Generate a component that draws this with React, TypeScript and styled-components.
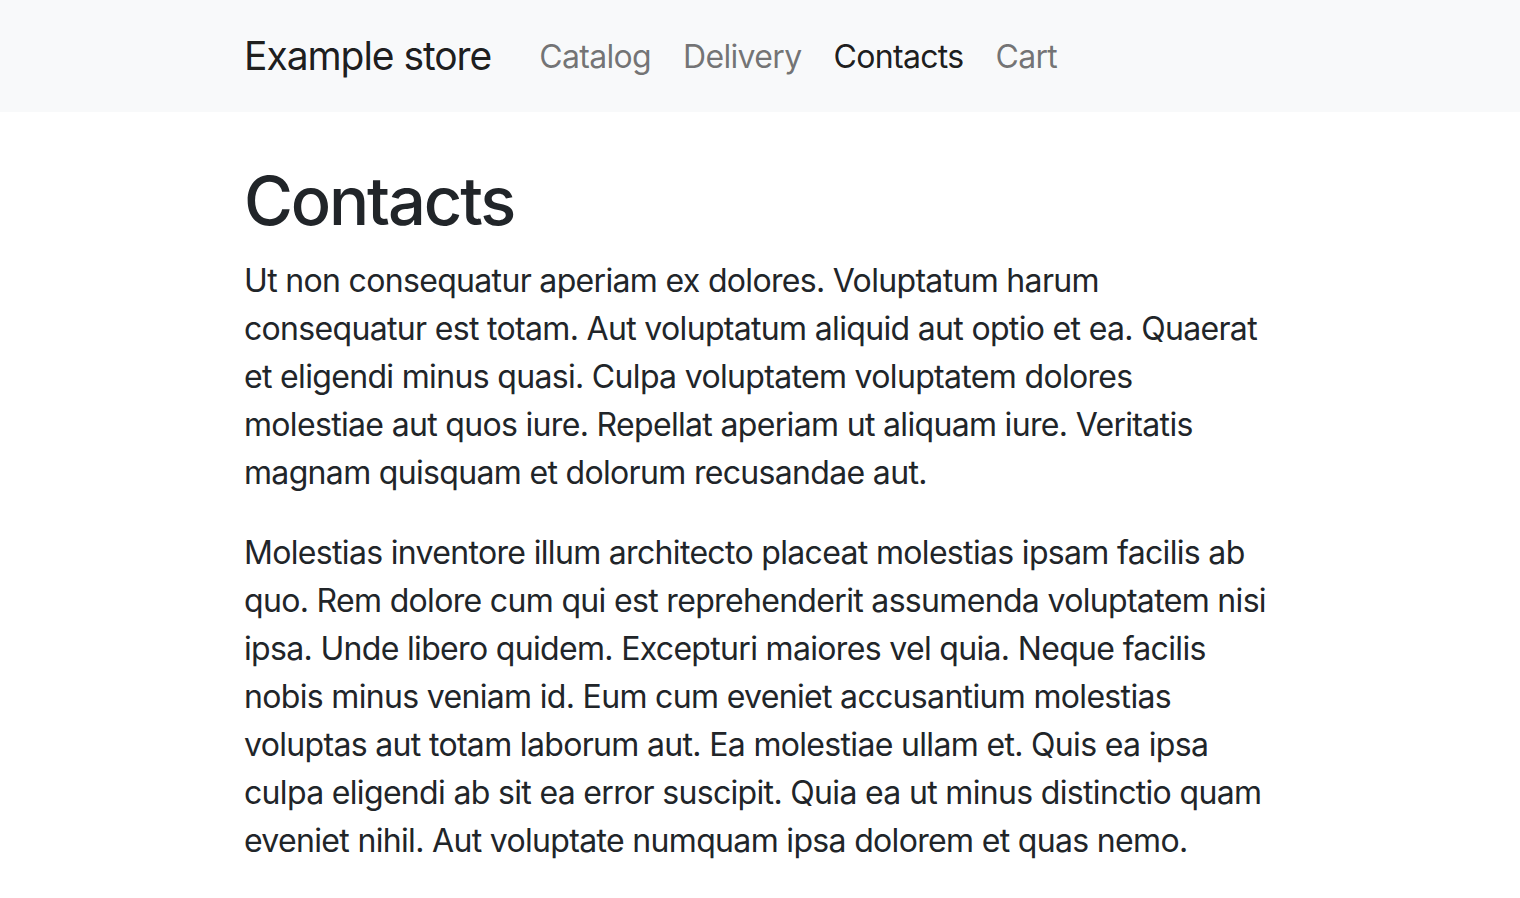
import React from 'react';
import styled, { createGlobalStyle } from 'styled-components';

const GlobalStyle = createGlobalStyle`
  * { box-sizing: border-box; }
  body {
    margin: 0;
    background: #fff;
    color: #212529;
    font-family: Inter, 'Noto Sans', sans-serif;
    font-size: 32px;
    line-height: 1.5;
    letter-spacing: -0.021em;
  }
`;

const Navbar = styled.nav`
  background-color: #f8f9fa;
  padding: 16px 0;
`;

const Container = styled.div`
  width: 1080px;
  margin: 0 auto;
  padding: 0 24px;
`;

const NavInner = styled(Container)`
  display: flex;
  align-items: center;
`;

const Brand = styled.a`
  color: rgba(0, 0, 0, 0.9);
  font-size: 39px;
  line-height: 1.5;
  letter-spacing: -0.027em;
  padding: 10px 0 9px;
  margin-right: 32px;
  text-decoration: none;
`;

const NavList = styled.ul`
  display: flex;
  list-style: none;
  margin: 0;
  padding: 0;
`;

const NavLink = styled.a<{ $active?: boolean }>`
  display: block;
  padding: 17px 16px 15px;
  font-size: 32px;
  line-height: 1.5;
  text-decoration: none;
  color: ${(p) => (p.$active ? 'rgba(0, 0, 0, 0.9)' : 'rgba(0, 0, 0, 0.55)')};
`;

const Main = styled(Container)`
  padding-top: 49px;
`;

const Title = styled.h1`
  font-size: 66.8px;
  font-weight: 500;
  line-height: 1.2;
  letter-spacing: -0.032em;
  margin: 0 0 16px;
`;

const Paragraph = styled.p`
  margin: 0 0 32px;
`;

const links = [
  { label: 'Catalog' },
  { label: 'Delivery' },
  { label: 'Contacts', active: true },
  { label: 'Cart' },
];

export default function App(): JSX.Element {
  return (
    <>
      <GlobalStyle />
      <Navbar>
        <NavInner>
          <Brand href="#">Example store</Brand>
          <NavList>
            {links.map((l) => (
              <li key={l.label}>
                <NavLink href="#" $active={l.active}>
                  {l.label}
                </NavLink>
              </li>
            ))}
          </NavList>
        </NavInner>
      </Navbar>
      <Main>
        <Title>Contacts</Title>
        <Paragraph>
          Ut non consequatur aperiam ex dolores. Voluptatum harum consequatur est totam. Aut voluptatum aliquid aut
          optio et ea. Quaerat et eligendi minus quasi. Culpa voluptatem voluptatem dolores molestiae aut quos iure.
          Repellat aperiam ut aliquam iure. Veritatis magnam quisquam et dolorum recusandae aut.
        </Paragraph>
        <Paragraph>
          Molestias inventore illum architecto placeat molestias ipsam facilis ab quo. Rem dolore cum qui est
          reprehenderit assumenda voluptatem nisi ipsa. Unde libero quidem. Excepturi maiores vel quia. Neque facilis
          nobis minus veniam id. Eum cum eveniet accusantium molestias voluptas aut totam laborum aut. Ea molestiae
          ullam et. Quis ea ipsa culpa eligendi ab sit ea error suscipit. Quia ea ut minus distinctio quam eveniet
          nihil. Aut voluptate numquam ipsa dolorem et quas nemo.
        </Paragraph>
      </Main>
    </>
  );
}
